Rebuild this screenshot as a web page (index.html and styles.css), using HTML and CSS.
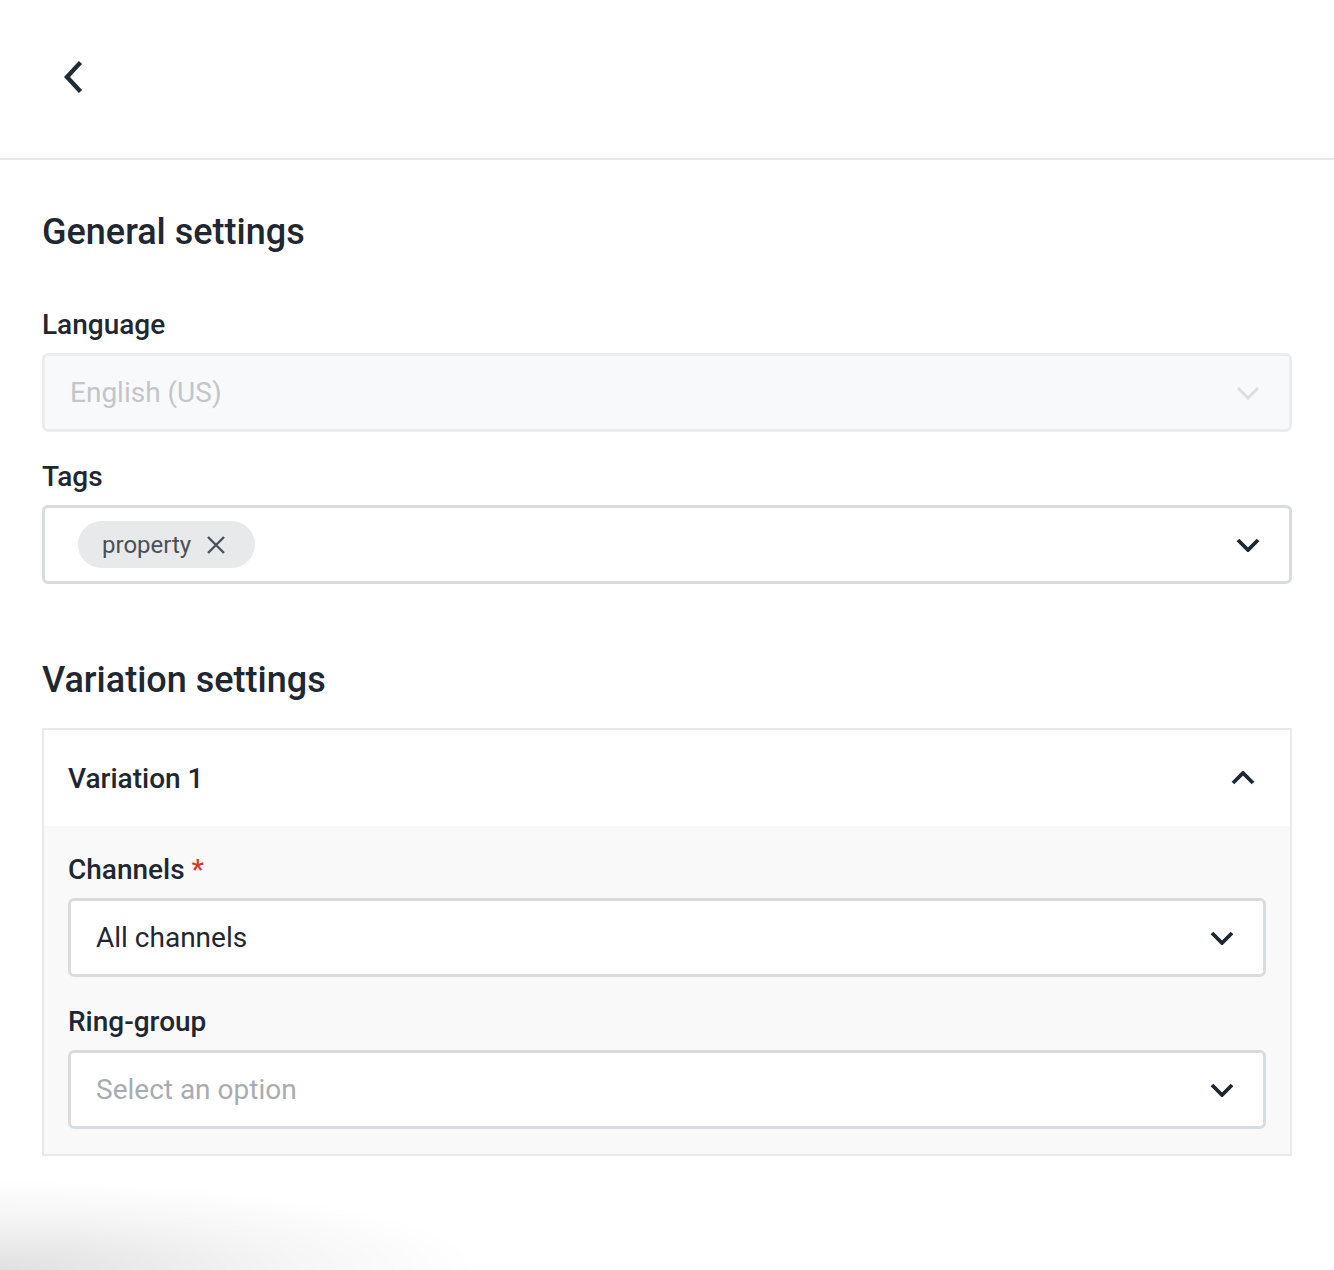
FILE: index.html
```html
<!DOCTYPE html>
<html lang="en">
<head>
    <meta charset="UTF-8">
    <meta name="viewport" content="width=device-width, initial-scale=1.0">
    <title>Settings</title>
    <link rel="stylesheet" href="styles.css">
</head>
<body>
    <header class="topbar">
        <button class="back-btn" aria-label="Back">
            <svg width="24" height="40" viewBox="0 0 24 40"><path d="M19 7 L7 20 L19 33" fill="none" stroke="#222a33" stroke-width="4.4" stroke-linecap="square" stroke-linejoin="miter"/></svg>
        </button>
    </header>

    <main class="content">
        <h2 class="section-title">General settings</h2>

        <div class="field">
            <label class="field-label">Language</label>
            <div class="select select-disabled">
                <span class="select-value">English (US)</span>
                <svg class="chevron" width="24" height="14" viewBox="0 0 24 14"><path d="M2 2 L12 12 L22 2" fill="none" stroke="#dcdde0" stroke-width="3"/></svg>
            </div>
        </div>

        <div class="field">
            <label class="field-label">Tags</label>
            <div class="select">
                <span class="chip">property
                    <svg width="20" height="20" viewBox="0 0 20 20"><path d="M2 2 L18 18 M18 2 L2 18" stroke="#4a5058" stroke-width="2.4"/></svg>
                </span>
                <svg class="chevron" width="24" height="14" viewBox="0 0 24 14"><path d="M2 2 L12 12 L22 2" fill="none" stroke="#1f2730" stroke-width="3.8"/></svg>
            </div>
        </div>

        <h2 class="section-title variation-title">Variation settings</h2>

        <div class="card">
            <div class="card-header">
                <span class="card-title">Variation 1</span>
                <svg class="chevron" width="24" height="14" viewBox="0 0 24 14"><path d="M2 12 L12 2 L22 12" fill="none" stroke="#1f2730" stroke-width="3.8"/></svg>
            </div>
            <div class="card-body">
                <div class="field">
                    <label class="field-label">Channels <span class="required">*</span></label>
                    <div class="select">
                        <span class="select-value filled">All channels</span>
                        <svg class="chevron" width="24" height="14" viewBox="0 0 24 14"><path d="M2 2 L12 12 L22 2" fill="none" stroke="#1f2730" stroke-width="3.8"/></svg>
                    </div>
                </div>
                <div class="field">
                    <label class="field-label">Ring-group</label>
                    <div class="select">
                        <span class="select-value placeholder">Select an option</span>
                        <svg class="chevron" width="24" height="14" viewBox="0 0 24 14"><path d="M2 2 L12 12 L22 2" fill="none" stroke="#1f2730" stroke-width="3.8"/></svg>
                    </div>
                </div>
            </div>
        </div>
    </main>

    <div class="corner-shadow"></div>
</body>
</html>
```

FILE: styles.css
```css
body {
    font-family: Roboto, 'Liberation Sans', sans-serif;
    margin: 0;
    padding: 0;
    background-color: #fff;
    color: #1f2730;
}

.topbar {
    height: 158px;
    border-bottom: 2px solid #e9e9e9;
    display: flex;
    align-items: center;
    padding-left: 60px;
}

.back-btn {
    background: none;
    border: none;
    padding: 0;
    display: flex;
    cursor: pointer;
    margin-top: -4px;
}

.content {
    padding: 0 42px 80px;
}

.section-title {
    margin: 52px 0 0;
    font-size: 36px;
    line-height: 40px;
    font-weight: 500;
    color: #1f2730;
}

.variation-title {
    margin-top: 76px;
}

.field {
    margin-top: 28px;
}

.content > .field:first-of-type {
    margin-top: 56px;
}

.field-label {
    display: block;
    font-size: 28px;
    line-height: 32px;
    font-weight: 500;
    margin-bottom: 12px;
    padding-top: 1px;
}

.required {
    color: #d6392b;
}

.select {
    height: 79px;
    box-sizing: border-box;
    border: 3px solid #d9dcdf;
    border-radius: 6px;
    background-color: #fff;
    display: flex;
    align-items: center;
    justify-content: space-between;
    padding: 0 29px 0 25px;
}

.select-disabled {
    background-color: #f8f9fa;
    border-color: #ebecee;
}

.select-value {
    font-size: 28px;
    color: #c3c5c9;
}

.select-value.filled {
    color: #1f2730;
}

.select-value.placeholder {
    color: #a8acb1;
}

.chip {
    display: inline-flex;
    align-items: center;
    gap: 15px;
    height: 47px;
    padding: 0 29px 0 24px;
    margin-left: 8px;
    border-radius: 24px;
    background-color: #e8e9eb;
    font-size: 24px;
    color: #4a5058;
}

.card {
    margin-top: 28px;
    border: 2px solid #e9e9e9;
}

.card-header {
    height: 96px;
    display: flex;
    align-items: center;
    justify-content: space-between;
    padding: 0 35px 0 24px;
    background-color: #fff;
}

.card-title {
    font-size: 28px;
    font-weight: 500;
}

.card-body {
    background-color: #f9f9f9;
    padding: 27px 24px 25px;
}

.card-body .field:first-child {
    margin-top: 0;
}

.corner-shadow {
    position: fixed;
    left: 0;
    bottom: 0;
    width: 520px;
    height: 110px;
    background: radial-gradient(ellipse 480px 90px at 0 100%, rgba(0,0,0,0.12), rgba(0,0,0,0.04) 60%, rgba(0,0,0,0) 100%);
    pointer-events: none;
}
```
